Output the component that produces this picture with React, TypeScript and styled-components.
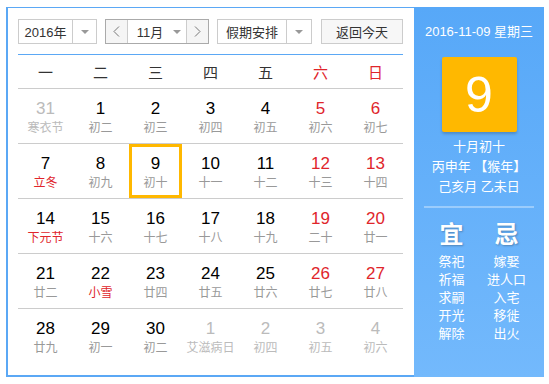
import React from 'react';
import styled, { createGlobalStyle } from 'styled-components';

const GlobalStyle = createGlobalStyle`
  body {
    margin: 0;
    background: #fff;
    font-family: "Liberation Sans", Arial, "Noto Sans CJK SC", sans-serif;
  }
`;

const Page = styled.div`
  padding: 7px 0 0 6px;
`;

const Calendar = styled.div`
  display: flex;
  width: 538px;
  height: 370px;
`;

const Main = styled.div`
  width: 408px;
  height: 370px;
  box-sizing: border-box;
  border-left: 2px solid #5ba8f5;
  border-top: 1px solid #5ba8f5;
  border-bottom: 2px solid #5ba8f5;
  padding: 11px 11px 0 10px;
`;

const Toolbar = styled.div`
  display: flex;
  gap: 8px;
  height: 25px;
  margin-bottom: 10px;
`;

const Select = styled.div<{ $w: number }>`
  display: flex;
  width: ${p => p.$w}px;
  box-sizing: border-box;
  border: 1px solid #ccc;
  font-size: 13px;
  color: #333;
`;

const SelectText = styled.div`
  flex: 1;
  display: flex;
  align-items: center;
  justify-content: center;
`;

const SelectArrow = styled.div<{ $w: number }>`
  width: ${p => p.$w}px;
  border-left: 1px solid #ccc;
  display: flex;
  align-items: center;
  justify-content: center;
`;

const Tri = styled.span`
  width: 0;
  height: 0;
  border-left: 4px solid transparent;
  border-right: 4px solid transparent;
  border-top: 4px solid #999;
`;

const MonthGroup = styled.div`
  display: flex;
  width: 104px;
  box-sizing: border-box;
  border: 1px solid #aaa;
  font-size: 13px;
  color: #333;
`;

const NavBtn = styled.div<{ $side: 'l' | 'r' }>`
  width: 21px;
  background: #f5f5f5;
  display: flex;
  align-items: center;
  justify-content: center;
  ${p => (p.$side === 'l' ? 'border-right: 1px solid #ccc;' : 'border-left: 1px solid #ccc;')}
`;

const MonthText = styled.div`
  flex: 1;
  display: flex;
  align-items: center;
  justify-content: center;
  gap: 10px;
  padding-left: 4px;
`;

const TodayBtn = styled.div`
  margin-left: auto;
  width: 82px;
  box-sizing: border-box;
  border: 1px solid #ccc;
  background: #f7f7f7;
  font-size: 13px;
  color: #333;
  display: flex;
  align-items: center;
  justify-content: center;
`;

const Grid = styled.div`
  display: grid;
  grid-template-columns: repeat(7, 55px);
`;

const WeekHead = styled(Grid)`
  border-top: 1px solid #5ba8f5;
  border-bottom: 1px solid #ccc;
  height: 33px;
`;

const WeekDay = styled.div<{ $red?: boolean }>`
  display: flex;
  align-items: center;
  justify-content: center;
  font-size: 15px;
  color: ${p => (p.$red ? '#e0252b' : '#333')};
`;

const Row = styled(Grid)<{ $last?: boolean }>`
  height: 55px;
  box-sizing: border-box;
  border-bottom: ${p => (p.$last ? 'none' : '1px solid #ccc')};
`;

const Cell = styled.div<{ $selected?: boolean }>`
  position: relative;
  display: flex;
  flex-direction: column;
  align-items: center;
  padding-top: 10px;
  &::after {
    content: '';
    display: ${p => (p.$selected ? 'block' : 'none')};
    position: absolute;
    left: 1px;
    right: 1px;
    top: 0;
    bottom: 0;
    border: 3px solid #ffb800;
  }
`;

const DayNum = styled.div<{ $tone: 'normal' | 'weekend' | 'other' }>`
  font-size: 17px;
  line-height: 20px;
  color: ${p => (p.$tone === 'weekend' ? '#e0252b' : p.$tone === 'other' ? '#bbb' : '#000')};
`;

const Lunar = styled.div<{ $tone: 'normal' | 'festival' | 'other' }>`
  font-size: 12px;
  line-height: 18px;
  white-space: nowrap;
  color: ${p => (p.$tone === 'festival' ? '#e0252b' : p.$tone === 'other' ? '#bbb' : '#999')};
`;

const Side = styled.div`
  width: 130px;
  height: 370px;
  background: linear-gradient(#57a8f8, #73b9fc);
  color: #fff;
  display: flex;
  flex-direction: column;
  align-items: center;
  padding-top: 15px;
  box-sizing: border-box;
`;

const SideDate = styled.div`
  font-size: 13px;
  line-height: 20px;
`;

const BigDay = styled.div`
  margin-top: 15px;
  width: 75px;
  height: 75px;
  background: #ffb800;
  border-radius: 2px;
  box-shadow: 0 2px 3px rgba(0, 0, 0, 0.2);
  display: flex;
  align-items: center;
  justify-content: center;
  font-size: 50px;
`;

const LunarInfo = styled.div`
  margin-top: 5px;
  font-size: 13px;
  line-height: 20px;
  text-align: center;
  white-space: pre;
`;

const Divider = styled.div`
  width: 110px;
  height: 2px;
  margin-top: 9px;
  background: rgba(255, 255, 255, 0.35);
`;

const Advice = styled.div`
  display: grid;
  grid-template-columns: 55px 55px;
  margin-top: 12px;
`;

const AdviceCol = styled.div`
  display: flex;
  flex-direction: column;
  align-items: center;
`;

const AdviceHead = styled.div`
  font-size: 24px;
  font-weight: bold;
  line-height: 30px;
  margin-bottom: 3px;
  text-shadow: 1px 1px 2px rgba(0, 0, 0, 0.25);
`;

const AdviceItem = styled.div`
  font-size: 13px;
  line-height: 18px;
`;

type Day = {
  n: number;
  lunar: string;
  other?: boolean;
  fest?: boolean;
  selected?: boolean;
};

const weeks: Day[][] = [
  [
    { n: 31, lunar: '寒衣节', other: true },
    { n: 1, lunar: '初二' },
    { n: 2, lunar: '初三' },
    { n: 3, lunar: '初四' },
    { n: 4, lunar: '初五' },
    { n: 5, lunar: '初六' },
    { n: 6, lunar: '初七' },
  ],
  [
    { n: 7, lunar: '立冬', fest: true },
    { n: 8, lunar: '初九' },
    { n: 9, lunar: '初十', selected: true },
    { n: 10, lunar: '十一' },
    { n: 11, lunar: '十二' },
    { n: 12, lunar: '十三' },
    { n: 13, lunar: '十四' },
  ],
  [
    { n: 14, lunar: '下元节', fest: true },
    { n: 15, lunar: '十六' },
    { n: 16, lunar: '十七' },
    { n: 17, lunar: '十八' },
    { n: 18, lunar: '十九' },
    { n: 19, lunar: '二十' },
    { n: 20, lunar: '廿一' },
  ],
  [
    { n: 21, lunar: '廿二' },
    { n: 22, lunar: '小雪', fest: true },
    { n: 23, lunar: '廿四' },
    { n: 24, lunar: '廿五' },
    { n: 25, lunar: '廿六' },
    { n: 26, lunar: '廿七' },
    { n: 27, lunar: '廿八' },
  ],
  [
    { n: 28, lunar: '廿九' },
    { n: 29, lunar: '初一' },
    { n: 30, lunar: '初二' },
    { n: 1, lunar: '艾滋病日', other: true },
    { n: 2, lunar: '初四', other: true },
    { n: 3, lunar: '初五', other: true },
    { n: 4, lunar: '初六', other: true },
  ],
];

const weekNames = ['一', '二', '三', '四', '五', '六', '日'];
const yi = ['祭祀', '祈福', '求嗣', '开光', '解除'];
const ji = ['嫁娶', '进人口', '入宅', '移徙', '出火'];

const Chevron = ({ dir }: { dir: 'l' | 'r' }) => (
  <svg width="7" height="11" viewBox="0 0 7 11">
    <polyline
      points={dir === 'l' ? '6,0.5 1,5.5 6,10.5' : '1,0.5 6,5.5 1,10.5'}
      fill="none"
      stroke="#777"
      strokeWidth="1"
    />
  </svg>
);

export default function App() {
  return (
    <Page>
      <GlobalStyle />
      <Calendar>
        <Main>
          <Toolbar>
            <Select $w={79}>
              <SelectText>2016年</SelectText>
              <SelectArrow $w={23}><Tri /></SelectArrow>
            </Select>
            <MonthGroup>
              <NavBtn $side="l"><Chevron dir="l" /></NavBtn>
              <MonthText>11月<Tri /></MonthText>
              <NavBtn $side="r"><Chevron dir="r" /></NavBtn>
            </MonthGroup>
            <Select $w={95}>
              <SelectText>假期安排</SelectText>
              <SelectArrow $w={24}><Tri /></SelectArrow>
            </Select>
            <TodayBtn>返回今天</TodayBtn>
          </Toolbar>
          <WeekHead>
            {weekNames.map((w, i) => (
              <WeekDay key={w} $red={i >= 5}>{w}</WeekDay>
            ))}
          </WeekHead>
          {weeks.map((week, wi) => (
            <Row key={wi} $last={wi === weeks.length - 1}>
              {week.map((d, di) => (
                <Cell key={di} $selected={d.selected}>
                  <DayNum $tone={d.other ? 'other' : di >= 5 ? 'weekend' : 'normal'}>{d.n}</DayNum>
                  <Lunar $tone={d.other ? 'other' : d.fest ? 'festival' : 'normal'}>{d.lunar}</Lunar>
                </Cell>
              ))}
            </Row>
          ))}
        </Main>
        <Side>
          <SideDate>2016-11-09 星期三</SideDate>
          <BigDay>9</BigDay>
          <LunarInfo>
            <div>十月初十</div>
            <div>丙申年 【猴年】</div>
            <div>己亥月 乙未日</div>
          </LunarInfo>
          <Divider />
          <Advice>
            <AdviceCol>
              <AdviceHead>宜</AdviceHead>
              {yi.map(t => <AdviceItem key={t}>{t}</AdviceItem>)}
            </AdviceCol>
            <AdviceCol>
              <AdviceHead>忌</AdviceHead>
              {ji.map(t => <AdviceItem key={t}>{t}</AdviceItem>)}
            </AdviceCol>
          </Advice>
        </Side>
      </Calendar>
    </Page>
  );
}
